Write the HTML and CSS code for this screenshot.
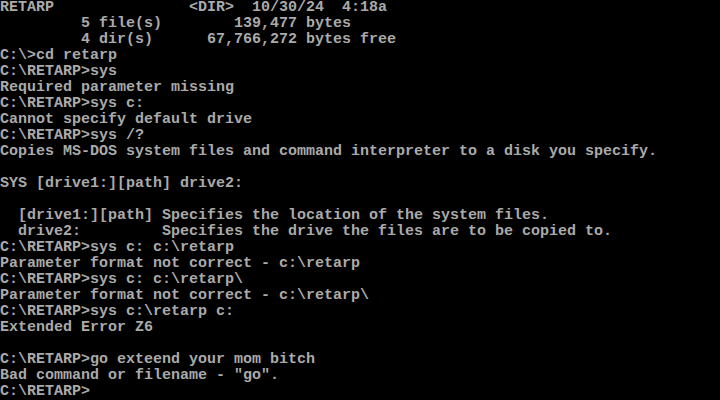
FILE: index.html
```html
<!DOCTYPE html>
<html lang="en">
<head>
<meta charset="utf-8">
<title>MS-DOS</title>
<link rel="stylesheet" href="styles.css">
</head>
<body>
<pre class="screen">RETARP               &lt;DIR&gt;  10/30/24  4:18a
         5 file(s)        139,477 bytes
         4 dir(s)      67,766,272 bytes free
C:\&gt;cd retarp
C:\RETARP&gt;sys
Required parameter missing
C:\RETARP&gt;sys c:
Cannot specify default drive
C:\RETARP&gt;sys /?
Copies MS-DOS system files and command interpreter to a disk you specify.

SYS [drive1:][path] drive2:

  [drive1:][path] Specifies the location of the system files.
  drive2:         Specifies the drive the files are to be copied to.
C:\RETARP&gt;sys c: c:\retarp
Parameter format not correct - c:\retarp
C:\RETARP&gt;sys c: c:\retarp\
Parameter format not correct - c:\retarp\
C:\RETARP&gt;sys c:\retarp c:
Extended Error Z6

C:\RETARP&gt;go exteend your mom bitch
Bad command or filename - "go".
C:\RETARP&gt;</pre>
</body>
</html>
```
FILE: styles.css
```css
html, body {
  margin: 0;
  padding: 0;
  background: #000;
}
body {
  width: 720px;
  height: 400px;
  overflow: hidden;
}
.screen {
  margin: 0;
  padding: 0;
  color: #aaaaaa;
  font-family: "Liberation Mono", "DejaVu Sans Mono", monospace;
  font-size: 15px;
  font-weight: bold;
  line-height: 16px;
  white-space: pre;
}
```
